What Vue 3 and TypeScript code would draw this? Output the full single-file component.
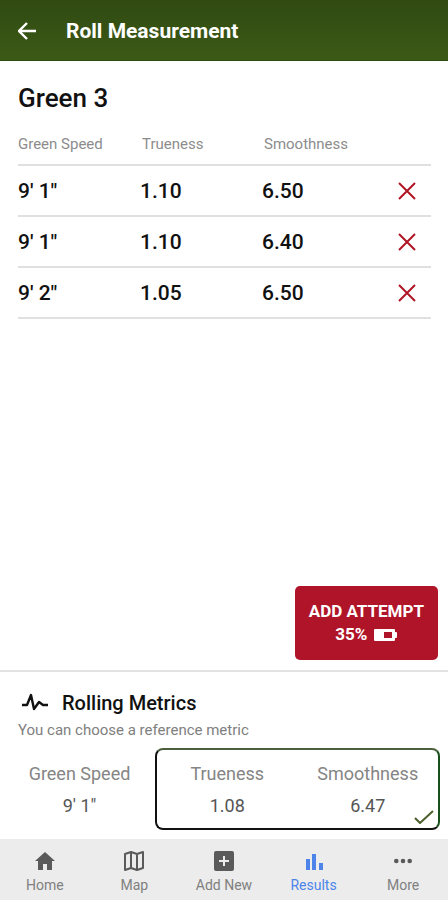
<script setup lang="ts">
import { ref } from 'vue'

interface Attempt {
  id: number
  speed: string
  trueness: string
  smoothness: string
}

const attempts = ref<Attempt[]>([
  { id: 1, speed: '9\' 1"', trueness: '1.10', smoothness: '6.50' },
  { id: 2, speed: '9\' 1"', trueness: '1.10', smoothness: '6.40' },
  { id: 3, speed: '9\' 2"', trueness: '1.05', smoothness: '6.50' },
])

const referenceChosen = ref(true)
const currentTab = ref('Results')
const tabs: string[] = ['Home', 'Map', 'Add New', 'Results', 'More']

function removeAttempt(id: number): void {
  attempts.value = attempts.value.filter((a) => a.id !== id)
}
</script>

<template>
  <div class="screen">
    <header class="top-bar">
      <button class="back" type="button" aria-label="Back">
        <svg viewBox="0 0 18 18" width="18" height="18">
          <path d="M9 1 1 9l8 8M1 9h17" fill="none" stroke="#fff" stroke-width="2.400" />
        </svg>
      </button>
      <h1>Roll Measurement</h1>
    </header>

    <main class="content">
      <h2>Green 3</h2>
      <table class="attempts">
        <thead>
          <tr>
            <th scope="col">Green Speed</th>
            <th scope="col">Trueness</th>
            <th scope="col">Smoothness</th>
            <td class="action"></td>
          </tr>
        </thead>
        <tbody>
          <tr v-for="a in attempts" :key="a.id">
            <td>{{ a.speed }}</td>
            <td>{{ a.trueness }}</td>
            <td>{{ a.smoothness }}</td>
            <td class="action">
              <button class="remove" type="button" aria-label="Remove attempt" @click="removeAttempt(a.id)">
                <svg viewBox="0 0 18 18" width="18" height="18">
                  <path d="M1 1l16 16M17 1 1 17" fill="none" stroke="#b01525" stroke-width="2" />
                </svg>
              </button>
            </td>
          </tr>
        </tbody>
      </table>
      <button class="add" type="button">
        <span>ADD ATTEMPT</span>
        <span class="battery">
          35%
          <svg viewBox="0 0 23 12" width="23" height="12">
            <path
              fill="#fff"
              fill-rule="evenodd"
              d="M1 0h19q1 0 1 1v2h1q1 0 1 1v4q0 1-1 1h-1v2q0 1-1 1H1q-1 0-1-1V1q0-1 1-1zM10 3v6h8V3z"
            />
          </svg>
        </span>
      </button>
    </main>

    <section class="metrics">
      <h3>
        <svg viewBox="0 0 26 20" width="26" height="20">
          <path
            d="M0 12h5L9 2l3 14 5-7 4 3h5"
            fill="none"
            stroke="#111"
            stroke-width="2.400"
            stroke-linejoin="round"
          />
        </svg>
        Rolling Metrics
      </h3>
      <p class="hint">You can choose a reference metric</p>
      <div class="choices">
        <button class="choice speed" type="button">
          <span class="metric"><span class="name">Green Speed</span><span class="value">9' 1"</span></span>
        </button>
        <button
          class="choice pair"
          :class="{ selected: referenceChosen }"
          type="button"
          :aria-pressed="referenceChosen"
          @click="referenceChosen = !referenceChosen"
        >
          <span class="metric"><span class="name">Trueness</span><span class="value">1.08</span></span>
          <span class="metric"><span class="name">Smoothness</span><span class="value">6.47</span></span>
          <svg v-if="referenceChosen" class="tick" viewBox="0 0 20 14" width="20" height="14">
            <path d="M1 8l5 5L19 1" fill="none" stroke="#4b5f2c" stroke-width="2" />
          </svg>
        </button>
      </div>
    </section>

    <nav class="tabs">
      <a
        v-for="tab in tabs"
        :key="tab"
        href="#"
        :class="{ active: tab === currentTab }"
        @click.prevent="currentTab = tab"
      >
        <svg viewBox="0 0 24 24" width="24" height="24" fill="currentColor">
          <path v-if="tab === 'Home'" d="M12 3 2 12h3v9h5v-6h4v6h5v-9h3z" />
          <path
            v-else-if="tab === 'Map'"
            fill="none"
            stroke="currentColor"
            stroke-width="2"
            stroke-linejoin="round"
            d="M3 5l6-2 6 2 6-2v16l-6 2-6-2-6 2zM9 3v16M15 5v16"
          />
          <path
            v-else-if="tab === 'Add New'"
            fill-rule="evenodd"
            d="M4 2h16q2 0 2 2v16q0 2-2 2H4q-2 0-2-2V4q0-2 2-2zM11 7v4H7v2h4v4h2v-4h4v-2h-4V7z"
          />
          <path v-else-if="tab === 'Results'" d="M4 10h4v11H4zM10 5h4v16h-4zM17 14h4v7h-4z" />
          <path
            v-else
            d="M3 12a2.300 2.300 0 1 0 4.600 0a2.300 2.300 0 1 0-4.600 0M9.700 12a2.300 2.300 0 1 0 4.600 0a2.300 2.300 0 1 0-4.600 0M16.400 12a2.300 2.300 0 1 0 4.600 0a2.300 2.300 0 1 0-4.600 0"
          />
        </svg>
        <span>{{ tab }}</span>
      </a>
    </nav>
  </div>
</template>

<style>
body {
  background: #fff;
}
</style>

<style scoped>
.screen {
  display: flex;
  flex-direction: column;
  min-height: 100vh;
  font-family: Roboto, 'Liberation Sans', sans-serif;
  color: #111;
}
.screen * {
  box-sizing: border-box;
}
button {
  font-family: inherit;
  border: 0;
  padding: 0;
  background: none;
  cursor: pointer;
}
svg {
  display: block;
}
h1,
h2,
h3,
p {
  margin: 0;
}
.top-bar {
  display: flex;
  align-items: center;
  gap: 30px;
  height: 61px;
  padding: 2px 18px 0;
  background: linear-gradient(#304a12, #3c5a16);
  border-bottom: 1px solid #2c4d10;
}
h1 {
  color: #fff;
  font-size: 21px;
  line-height: 26px;
  font-weight: 700;
}
.content {
  flex: 1;
  display: flex;
  flex-direction: column;
  padding: 21px 10px 10px 18px;
}
h2 {
  font-size: 26px;
  line-height: 32px;
  font-weight: 500;
}
.attempts {
  width: calc(100% - 7px);
  margin-top: 10px;
  table-layout: fixed;
  border-collapse: collapse;
}
.attempts th,
.attempts td {
  padding: 0;
  text-align: left;
  border-bottom: 2px solid #e0e0e0;
}
.attempts th {
  width: 122px;
  height: 41px;
  font-size: 15px;
  font-weight: 400;
  color: #8c8c8c;
}
.attempts th + th {
  padding-left: 2px;
}
.attempts tbody td {
  height: 51px;
  font-size: 21px;
  line-height: 24px;
  font-weight: 500;
}
.attempts .remove {
  display: block;
  margin: 0 15px 0 auto;
}
.add {
  display: flex;
  flex-direction: column;
  align-items: center;
  justify-content: center;
  align-self: flex-end;
  margin-top: auto;
  padding: 14px;
  border-radius: 5px;
  background: #b01428;
  color: #fff;
  font-size: 17px;
  line-height: 23px;
  font-weight: 700;
}
.battery {
  display: flex;
  align-items: center;
  gap: 7px;
}
.metrics {
  border-top: 2px solid #e2e2e2;
  padding: 18px 8px 9px 18px;
}
h3 {
  display: flex;
  align-items: center;
  gap: 14px;
  padding-left: 4px;
  font-size: 20px;
  line-height: 26px;
  font-weight: 500;
}
.hint {
  margin-top: 4px;
  font-size: 15px;
  line-height: 20px;
  color: #808080;
}
.choices {
  display: flex;
  gap: 14px;
  margin-top: 8px;
}
.choice {
  display: flex;
  height: 82px;
  border: 2px solid transparent;
  border-radius: 8px;
}
.speed {
  flex: 119;
}
.pair {
  position: relative;
  flex: 281;
}
.pair.selected {
  border-color: #4b5f3c #17501c #111 #111;
}
.metric {
  flex: 1;
  display: flex;
  flex-direction: column;
  align-items: center;
  gap: 8px;
  padding-top: 12px;
}
.name {
  font-size: 18px;
  line-height: 24px;
  color: #858585;
}
.value {
  font-size: 18px;
  line-height: 24px;
  color: #555;
}
.tick {
  position: absolute;
  right: 4px;
  bottom: 4px;
}
.tabs {
  display: flex;
  height: 61px;
  background: #ececec;
}
.tabs a {
  flex: 1;
  display: flex;
  flex-direction: column;
  align-items: center;
  gap: 4px;
  padding-top: 10px;
  font-size: 14px;
  line-height: 16px;
  color: #5a5a5a;
  text-decoration: none;
}
.tabs span {
  color: #808080;
}
.tabs .active,
.tabs .active span {
  color: #4d84ea;
}
</style>
